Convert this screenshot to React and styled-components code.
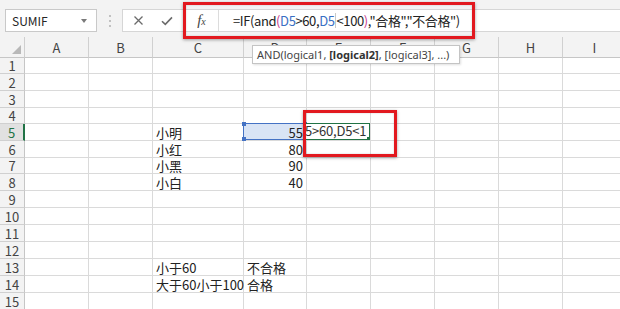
import React from 'react';
import styled, { createGlobalStyle } from 'styled-components';

const Global = createGlobalStyle`
  html, body { margin: 0; padding: 0; background: #fff; }
  body {
    width: 620px; height: 309px; overflow: hidden;
    font-family: "Noto Sans CJK SC", "Noto Sans", sans-serif;
  }
`;

const Page = styled.div`
  position: relative;
  width: 620px;
  height: 309px;
  overflow: hidden;
  background: #fff;
`;

const Toolbar = styled.div`
  height: 37px;
  box-sizing: border-box;
  background: #f3f3f3;
  display: flex;
  align-items: flex-start;
  padding: 9px 0 0 5px;
`;

const NameBox = styled.div`
  width: 92px;
  height: 23px;
  box-sizing: border-box;
  background: #fff;
  border: 1px solid #c9c9c9;
  display: flex;
  align-items: center;
  justify-content: space-between;
  padding: 0 9px 0 6px;
  font-size: 12px;
  color: #262626;
`;

const Caret = styled.span`
  width: 0; height: 0;
  border-left: 3.5px solid transparent;
  border-right: 3.5px solid transparent;
  border-top: 4px solid #7a7a7a;
`;

const Grip = styled.div`
  width: 25px;
  height: 23px;
  display: flex;
  flex-direction: column;
  align-items: center;
  justify-content: center;
  gap: 3px;
  & > span { width: 2px; height: 2px; background: #b0b0b0; border-radius: 1px; }
`;

const FormulaStrip = styled.div`
  flex: 1;
  height: 23px;
  box-sizing: border-box;
  background: #fff;
  border: 1px solid #d6d6d6;
  border-right: none;
  display: flex;
  align-items: stretch;
`;

const ActionGroup = styled.div`
  width: 62px;
  display: flex;
  align-items: center;
  justify-content: space-around;
  padding: 0 4px 0 2px;
  box-sizing: border-box;
`;

const FxButton = styled.div`
  width: 33px;
  display: flex;
  align-items: center;
  justify-content: center;
  border-right: 1px solid #dcdcdc;
  font-family: "Liberation Serif", serif;
  font-style: italic;
  font-size: 15px;
  color: #444;
  & sub { font-size: 10px; vertical-align: baseline; position: relative; top: 1px; }
`;

const FormulaText = styled.div`
  padding-left: 14px;
  display: flex;
  align-items: center;
  font-size: 13px;
  letter-spacing: -0.4px;
  color: #222;
  white-space: nowrap;
`;

const Tok = styled.span`
  color: ${p => p.$c || '#222'};
`;

const TextCursor = styled.span`
  display: inline-block;
  width: 1px;
  height: 15px;
  background: #c8c8c8;
  margin: 0 0.5px;
`;

const Sheet = styled.div`
  display: grid;
  grid-template-columns: 25px 64px 64px 91px 63px 64px 64px 64px 64px 64px;
  grid-template-rows: 21px ${p => p.$rows.map(r => r + 'px').join(' ')};
  font-size: 13px;
`;

const Corner = styled.div`
  background: #f3f3f3;
  border-right: 1px solid #cfcfcf;
  border-bottom: 1px solid #c6c6c6;
  box-sizing: border-box;
  display: flex;
  align-items: flex-end;
  justify-content: flex-end;
  padding: 0 3px 3px 0;
  &::after {
    content: '';
    width: 0; height: 0;
    border-left: 9px solid transparent;
    border-bottom: 9px solid #b8b8b8;
  }
`;

const ColHead = styled.div`
  background: #f3f3f3;
  border-right: 1px solid #d0d0d0;
  border-bottom: 1px solid #c6c6c6;
  box-sizing: border-box;
  display: flex;
  align-items: center;
  justify-content: center;
  color: #444;
  font-size: 13px;
`;

const RowHead = styled.div`
  background: ${p => (p.$active ? '#e1e1e1' : '#f3f3f3')};
  border-right: ${p => (p.$active ? '2px solid #217346' : '1px solid #c6c6c6')};
  border-bottom: 1px solid #d0d0d0;
  box-sizing: border-box;
  display: flex;
  align-items: center;
  justify-content: center;
  color: ${p => (p.$active ? '#217346' : '#444')};
  font-size: 13px;
  line-height: 1;
`;

const Cell = styled.div`
  position: relative;
  border-right: 1px solid #dadada;
  border-bottom: 1px solid #dadada;
  box-sizing: border-box;
  display: flex;
  align-items: flex-end;
  justify-content: ${p => (p.$right ? 'flex-end' : 'flex-start')};
  padding: 0 3px;
  line-height: 15px;
  color: #222;
  white-space: nowrap;
  overflow: visible;
  background: ${p => (p.$ref ? '#d9e4f5' : '#fff')};
  z-index: ${p => (p.$over ? 2 : 'auto')};
`;

const RefFrame = styled.div`
  position: absolute;
  inset: -1px 0 0 -1px;
  border: 1px solid #4472c4;
  pointer-events: none;
`;

const Handle = styled.span`
  position: absolute;
  width: 4px; height: 4px;
  background: #4472c4;
  ${p => (p.$t ? 'top: -2px;' : 'bottom: -2px;')}
  ${p => (p.$l ? 'left: -2px;' : 'right: -2px;')}
`;

const EditBox = styled.div`
  position: absolute;
  top: -1px; left: -2px; right: 0; bottom: 0;
  border: 1px solid #217346;
  background: #fff;
  overflow: hidden;
  display: flex;
  align-items: flex-end;
  justify-content: flex-start;
  font-size: 13px;
  letter-spacing: -0.2px;
  line-height: 16px;
  color: #333;
  white-space: nowrap;
  & > span { margin-left: -1px; }
`;

const FillHandle = styled.span`
  position: absolute;
  right: -3px; bottom: -3px;
  width: 4px; height: 4px;
  background: #217346;
  border: 1px solid #fff;
  z-index: 3;
`;

const Tooltip = styled.div`
  position: absolute;
  left: 252px;
  top: 45px;
  width: 208px;
  height: 19px;
  box-sizing: border-box;
  background: #fff;
  border: 1px solid #c4c4c4;
  box-shadow: 1px 1px 2px rgba(0,0,0,0.12);
  font-family: "Noto Sans", sans-serif;
  font-size: 11px;
  color: #444;
  display: flex;
  align-items: center;
  padding-left: 4px;
  white-space: nowrap;
  z-index: 5;
  & b { color: #333; font-weight: 700; }
`;

const Callout = styled.div`
  position: absolute;
  left: ${p => p.$x}px;
  top: ${p => p.$y}px;
  width: ${p => p.$w}px;
  height: ${p => p.$h}px;
  box-sizing: border-box;
  border: 3px solid #e2191f;
  box-shadow: 0 1px 3px rgba(0,0,0,0.35), inset 0 0 2px rgba(0,0,0,0.2);
  pointer-events: none;
  z-index: 6;
`;

const rowHeights = [16, 17, 17, 16, 17, 17, 16, 17, 17, 17, 17, 17, 17, 17, 17];
const cols = ['A', 'B', 'C', 'D', 'E', 'F', 'G', 'H', 'I'];

const data = {
  5: { C: '小明', D: '55' },
  6: { C: '小红', D: '80' },
  7: { C: '小黑', D: '90' },
  8: { C: '小白', D: '40' },
  13: { C: '小于60', D: '不合格' },
  14: { C: '大于60小于100', D: '合格' },
};

const isNum = v => /^\d+$/.test(v);

const XIcon = () => (
  <svg width="11" height="11" viewBox="0 0 11 11">
    <path d="M1.5 1.5 L9.5 9.5 M9.5 1.5 L1.5 9.5" stroke="#6b6b6b" strokeWidth="1.3" fill="none" />
  </svg>
);

const CheckIcon = () => (
  <svg width="12" height="10" viewBox="0 0 12 10">
    <path d="M1 5.2 L4.3 8.4 L11 1.4" stroke="#6b6b6b" strokeWidth="1.6" fill="none" />
  </svg>
);

export default function App() {
  const rows = rowHeights.map((_, i) => i + 1);
  return (
    <Page>
      <Global />
      <Toolbar>
        <NameBox>
          <span>SUMIF</span>
          <Caret />
        </NameBox>
        <Grip><span /><span /><span /></Grip>
        <FormulaStrip>
          <ActionGroup>
            <XIcon />
            <CheckIcon />
          </ActionGroup>
          <FxButton>f<sub>x</sub></FxButton>
          <FormulaText>
            <Tok>=IF(and</Tok>
            <Tok $c="#c83a8e">(</Tok>
            <Tok $c="#3a6fc4">D5</Tok>
            <Tok>&gt;60,</Tok>
            <Tok $c="#3a6fc4">D5</Tok>
            <TextCursor />
            <Tok>&lt;100</Tok>
            <Tok $c="#c83a8e">)</Tok>
            <Tok>,"合格","不合格")</Tok>
          </FormulaText>
        </FormulaStrip>
      </Toolbar>

      <Sheet $rows={rowHeights}>
        <Corner />
        {cols.map(c => (
          <ColHead key={c}>{c}</ColHead>
        ))}
        {rows.map(r => (
          <React.Fragment key={r}>
            <RowHead $active={r === 5}>{r}</RowHead>
            {cols.map(c => {
              const v = data[r] && data[r][c];
              const isRef = r === 5 && c === 'D';
              const isEdit = r === 5 && c === 'E';
              return (
                <Cell key={c} $right={v && isNum(v)} $ref={isRef} $over={isRef || isEdit}>
                  {v}
                  {isRef && (
                    <RefFrame>
                      <Handle $t $l />
                      <Handle $l />
                      <Handle $t />
                    </RefFrame>
                  )}
                  {isEdit && (
                    <EditBox>
                      <span>5&gt;60,D5&lt;1</span>
                      <FillHandle />
                    </EditBox>
                  )}
                </Cell>
              );
            })}
          </React.Fragment>
        ))}
      </Sheet>

      <Tooltip>
        AND(logical1,&nbsp;<b>[logical2]</b>, [logical3], ...)
      </Tooltip>
      <Callout $x={183} $y={2} $w={292} $h={37} />
      <Callout $x={303} $y={110} $w={94} $h={47} />
    </Page>
  );
}
